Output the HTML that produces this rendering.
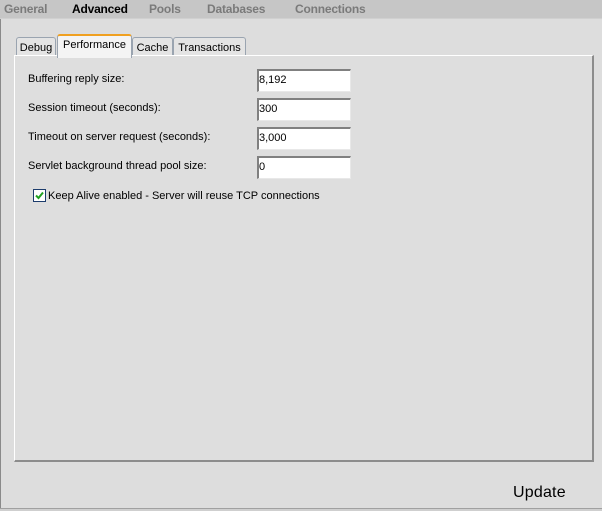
<!DOCTYPE html>
<html><head><style>
body{margin:0;width:602px;height:510px;background:#dddddd;font-family:"Liberation Sans",Arial,sans-serif;position:relative;overflow:hidden}
.top{position:absolute;left:0;top:0;width:602px;height:18px;background:#c6c6c6;border-bottom:1px solid #d0d0d0}
.top span{position:absolute;top:2px;font-size:12px;font-weight:bold;color:#7a7a7a;letter-spacing:-0.2px}
.ledge{position:absolute;left:0;top:19px;width:1px;height:491px;background:#8a8a8a}
.bedge{position:absolute;left:0;top:508px;width:602px;height:2px;background:#cfcfcf;border-top:1px solid #a0a0a0}
.tab{position:absolute;height:18px;background:#e4e4e4;border:1px solid #9aa4b0;border-bottom:none;border-radius:3px 3px 0 0;font-size:11px;color:#000;text-align:center;line-height:20px}
.panel{position:absolute;left:14px;top:55px;width:577px;height:404px;border-left:1px solid #fff;border-top:1px solid #fff;border-right:2px solid #8c8c8c;border-bottom:2px solid #8c8c8c;background:#dedede}
.lbl{position:absolute;left:28px;font-size:11px;color:#000}
.inp{position:absolute;left:257px;width:94px;background:#fff;border-top:2px solid #808080;border-left:2px solid #808080;border-right:1px solid #e8e8e8;border-bottom:1px solid #e8e8e8;font-size:11px;line-height:19px;box-sizing:border-box;height:23px}
</style></head><body>
<div class="top">
<span style="left:4px">General</span>
<span style="left:72px;color:#000">Advanced</span>
<span style="left:149px">Pools</span>
<span style="left:207px">Databases</span>
<span style="left:295px">Connections</span>
</div>
<div class="ledge"></div>
<div class="tab" style="left:16px;top:37px;width:38px">Debug</div>
<div class="tab" style="left:57px;top:34px;width:73px;height:22px;background:#f4f4f4;border-top:2px solid #f0a020;line-height:18px;z-index:2">Performance</div>
<div class="tab" style="left:132px;top:37px;width:39px">Cache</div>
<div class="tab" style="left:173px;top:37px;width:71px">Transactions</div>
<div class="panel"></div>
<div class="lbl" style="top:73px">Buffering reply size:</div>
<div class="inp" style="top:69px">8,192</div>
<div class="lbl" style="top:102px">Session timeout (seconds):</div>
<div class="inp" style="top:98px">300</div>
<div class="lbl" style="top:131px">Timeout on server request (seconds):</div>
<div class="inp" style="top:127px">3,000</div>
<div class="lbl" style="top:160px">Servlet background thread pool size:</div>
<div class="inp" style="top:156px">0</div>
<div style="position:absolute;left:33px;top:189px;width:11px;height:11px;border:1px solid #1c3c6c;background:#fff">
<svg style="position:absolute;left:0;top:0" width="11" height="11" viewBox="0 0 11 11"><path d="M2 5.5 L4.5 8 L9 2.5" stroke="#21a121" stroke-width="2" fill="none"/></svg></div>
<div class="lbl" style="left:48px;top:190px">Keep Alive enabled - Server will reuse TCP connections</div>
<div style="position:absolute;left:513px;top:484px;font-size:16px;color:#000;letter-spacing:0.2px">Update</div>
<div class="bedge"></div>
</body></html>
